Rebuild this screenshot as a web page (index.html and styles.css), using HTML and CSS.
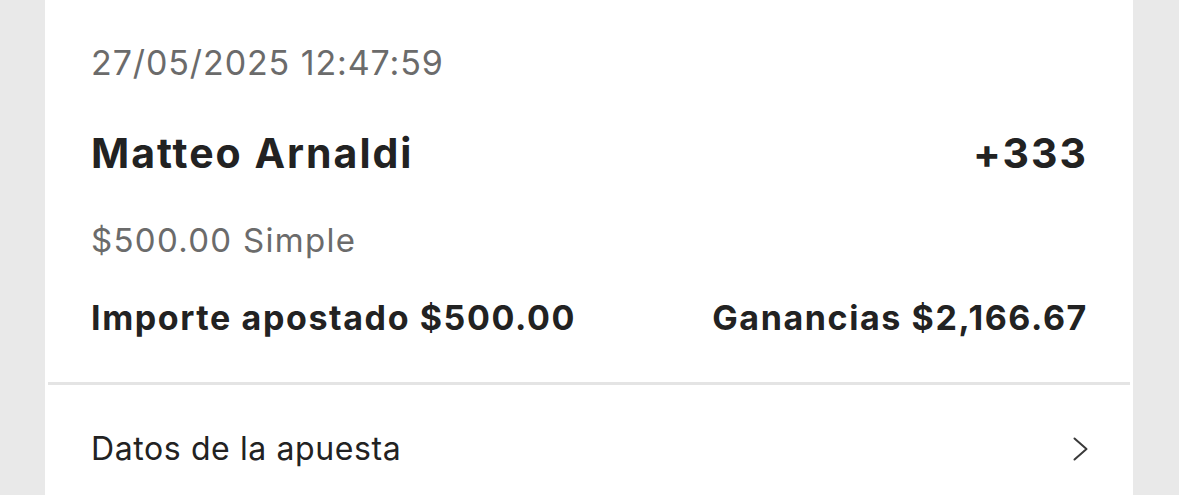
FILE: index.html
```html
<!DOCTYPE html>
<html lang="es">
<head>
<meta charset="UTF-8">
<meta name="viewport" content="width=device-width, initial-scale=1.0">
<title>Detalle de apuesta</title>
<link rel="stylesheet" href="styles.css">
</head>
<body>

<div class="card">
  <div class="summary">
    <div class="date">27/05/2025 12:47:59</div>

    <div class="row name-row">
      <span class="player">Matteo Arnaldi</span>
      <span class="odds">+333</span>
    </div>

    <div class="stake-type">$500.00 Simple</div>

    <div class="row totals">
      <span>Importe apostado $500.00</span>
      <span>Ganancias $2,166.67</span>
    </div>
  </div>

  <div class="divider"></div>

  <div class="row details">
    <span>Datos de la apuesta</span>
    <svg class="chevron" width="16" height="24" viewBox="0 0 16 24">
      <path d="M2.5 1.5 L14.5 12 L2.5 22.5" fill="none" stroke="#3a3a3a" stroke-width="2" stroke-linecap="round" stroke-linejoin="round"/>
    </svg>
  </div>
</div>

</body>
</html>
```

FILE: styles.css
```css
body {
  font-family: Inter, "Noto Sans", sans-serif;
  margin: 0;
  background-color: #e9e9e9;
  color: #222;
}
.card {
  margin: 0 46px 0 45px;
  min-height: 495px;
  background-color: #fff;
}
.summary {
  padding: 43px 45px 44px 46px;
}
.row {
  display: flex;
  justify-content: space-between;
  align-items: center;
}
.date {
  font-size: 34px;
  line-height: 40px;
  letter-spacing: 0.9px;
  color: #6b6b6b;
}
.name-row {
  margin-top: 46px;
  font-size: 41px;
  line-height: 48px;
  font-weight: 700;
  letter-spacing: 2px;
}
.stake-type {
  margin-top: 43px;
  font-size: 33px;
  line-height: 40px;
  letter-spacing: 1.3px;
  color: #6b6b6b;
}
.totals {
  margin-top: 38px;
  font-size: 34px;
  line-height: 40px;
  font-weight: 700;
  letter-spacing: 1.6px;
}
.divider {
  height: 3px;
  margin: 0 3px 0 3px;
  background-color: #e4e4e4;
}
.details {
  padding: 44px 45px 0 46px;
  font-size: 32px;
  line-height: 40px;
  letter-spacing: 0.6px;
}
.chevron {
  display: block;
}
```
